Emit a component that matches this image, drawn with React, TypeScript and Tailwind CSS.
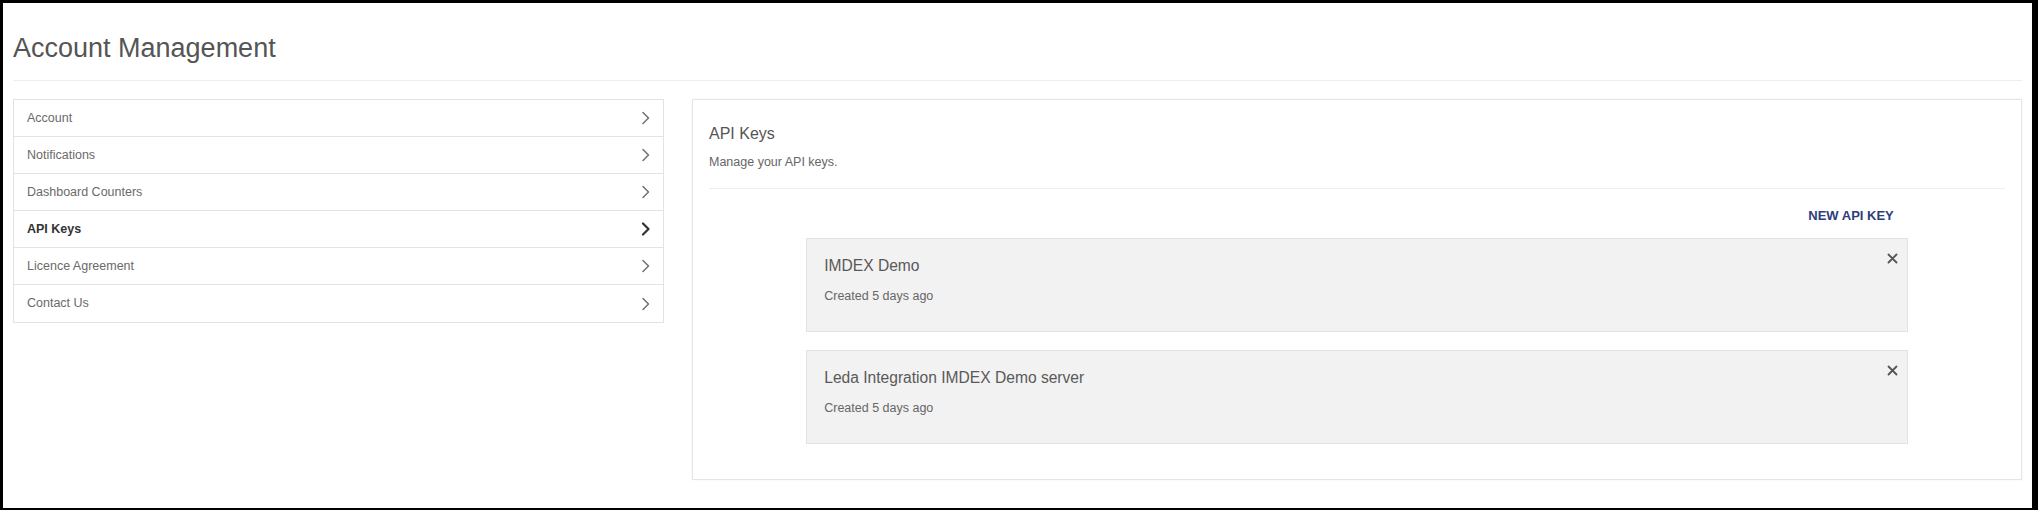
type NavItem = {
  label: string;
  active?: boolean;
};

type ApiKey = {
  name: string;
  created: string;
};

const navItems: NavItem[] = [
  { label: "Account" },
  { label: "Notifications" },
  { label: "Dashboard Counters" },
  { label: "API Keys", active: true },
  { label: "Licence Agreement" },
  { label: "Contact Us" },
];

const apiKeys: ApiKey[] = [
  { name: "IMDEX Demo", created: "Created 5 days ago" },
  { name: "Leda Integration IMDEX Demo server", created: "Created 5 days ago" },
];

function Chevron({ active }: { active?: boolean }) {
  return (
    <svg width="9" height="14" viewBox="0 0 9 14" fill="none">
      <polyline
        points="2,1.5 7.5,7 2,12.5"
        stroke={active ? "#333" : "#707070"}
        strokeWidth={active ? 2.2 : 1.5}
        strokeLinecap="round"
        strokeLinejoin="round"
      />
    </svg>
  );
}

function CloseIcon() {
  return (
    <svg width="11" height="11" viewBox="0 0 11 11" fill="none">
      <path d="M1.5 1.5 L9.5 9.5 M9.5 1.5 L1.5 9.5" stroke="#555" strokeWidth="1.8" strokeLinecap="round" />
    </svg>
  );
}

export default function App() {
  return (
    <div className="h-[510px] w-full bg-black pt-[3px] pl-[3px] pr-[6px] pb-[2px] font-['Liberation_Sans',Arial,sans-serif]">
      <div className="h-full bg-white px-[10px]">
        <div className="pt-[30px] pb-[16px] border-b border-[#eeeeee]">
          <h1 className="text-[27px] leading-[31px] text-[#555]">Account Management</h1>
        </div>

        <div className="mt-[18px] flex items-start gap-[28px]">
          <ul className="w-[651px] shrink-0 border border-[#e3e3e3]">
            {navItems.map((item, i) => (
              <li
                key={i}
                className={
                  "flex h-[37px] items-center justify-between pl-[13px] pr-[13px] " +
                  (i < navItems.length - 1 ? "border-b border-[#e3e3e3]" : "")
                }
              >
                <span
                  className={
                    item.active
                      ? "text-[12.5px] font-bold text-[#333]"
                      : "text-[12.5px] text-[#6a6a6a]"
                  }
                >
                  {item.label}
                </span>
                <Chevron active={item.active} />
              </li>
            ))}
          </ul>

          <div className="flex-1 border border-[#e5e5e5] shadow-[0_0_2px_rgba(0,0,0,0.06)] px-[16px] pt-[25px] pb-[35px]">
            <h2 className="text-[16px] leading-[18px] text-[#555]">API Keys</h2>
            <p className="mt-[12px] text-[12.5px] leading-[14px] text-[#666]">Manage your API keys.</p>
            <div className="mt-[19px] border-t border-[#eeeeee]" />

            <div className="mx-auto mt-[19px] w-[85%]">
              <div className="flex justify-end">
                <button className="pr-[14px] text-[13px] leading-[15px] font-bold text-[#2f3d7c]">
                  NEW API KEY
                </button>
              </div>

              <div className="mt-[15px] flex flex-col gap-[18px]">
                {apiKeys.map((key, i) => (
                  <div
                    key={i}
                    className="relative border border-[#e2e2e2] bg-[#f2f2f2] px-[17px] pt-[18px] pb-[28px]"
                  >
                    <div className="text-[15.6px] leading-[18px] text-[#595959]">{key.name}</div>
                    <div className="mt-[14px] text-[12.5px] leading-[14px] text-[#666]">{key.created}</div>
                    <button className="absolute top-[14px] right-[9px]">
                      <CloseIcon />
                    </button>
                  </div>
                ))}
              </div>
            </div>
          </div>
        </div>
      </div>
    </div>
  );
}
